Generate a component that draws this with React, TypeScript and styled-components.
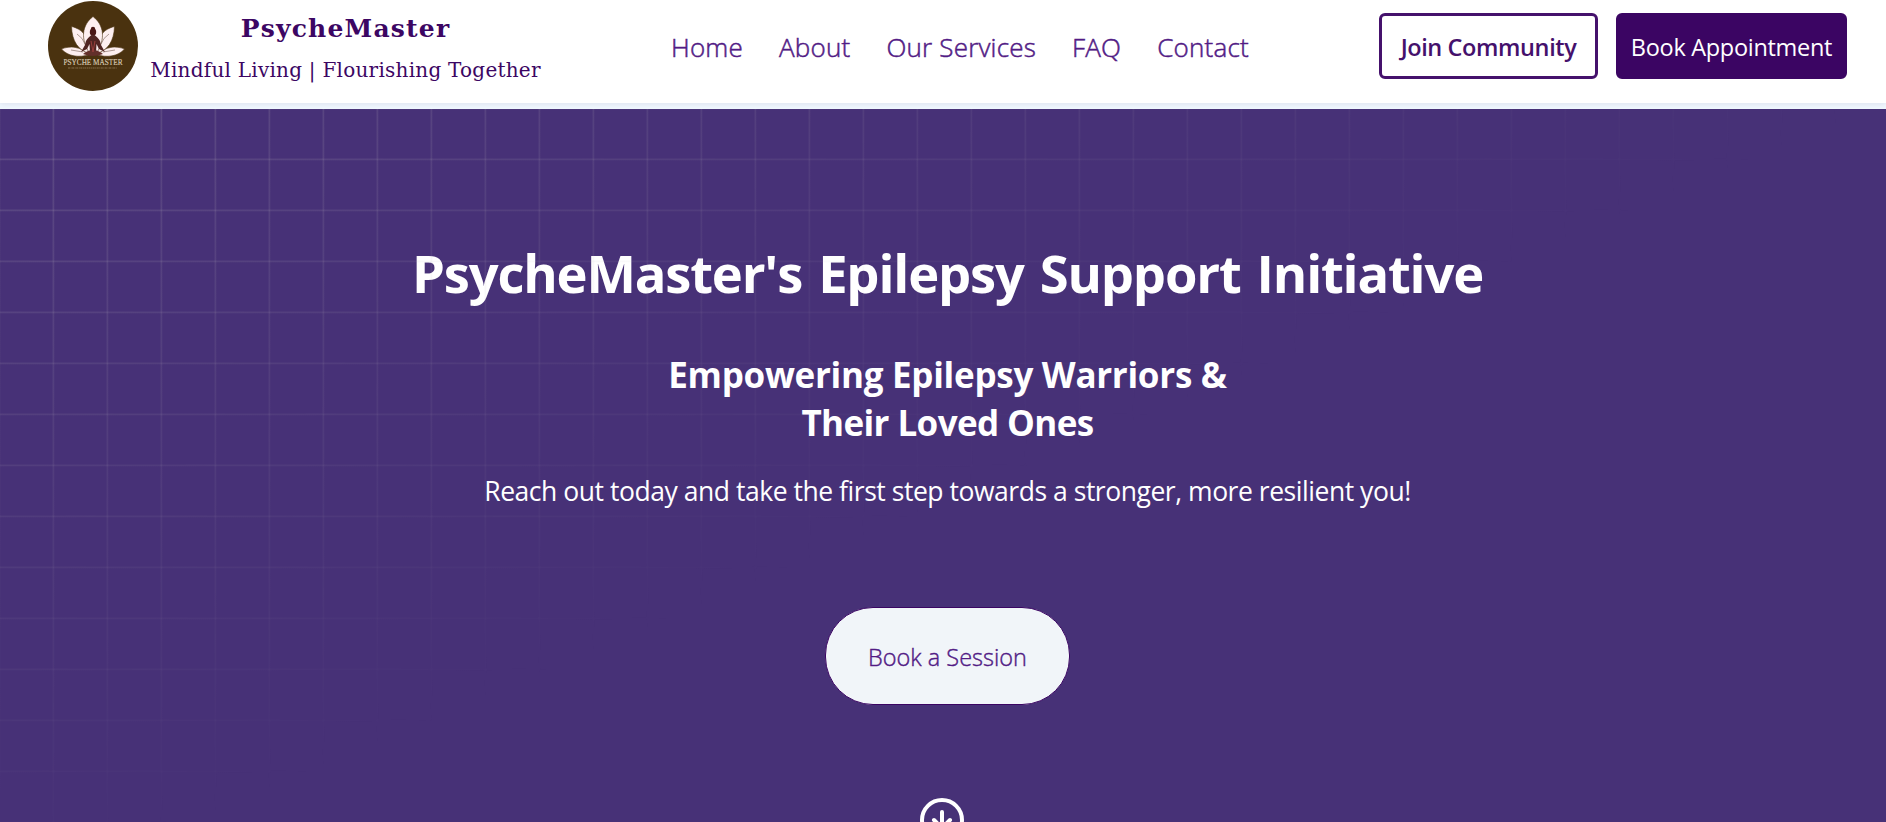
import React from 'react';
import styled, { createGlobalStyle } from 'styled-components';
import { FiArrowDownCircle } from 'react-icons/fi';

const sans = '"Open Sans", "Noto Sans", sans-serif';

const GlobalStyle = createGlobalStyle`
  *, *::before, *::after { box-sizing: border-box; }
  body { margin: 0; background: #f0f8ff; font-family: ${sans}; }
`;

const Page = styled.div`
  height: 822px;
  overflow: hidden;
  display: flex;
  flex-direction: column;
`;

const Header = styled.header`
  flex: none;
  height: 103px;
  padding: 0 39px 11px 48px;
  background: #fff;
  box-shadow: 0 1px 6px rgba(60, 20, 80, 0.1);
  display: grid;
  grid-template-columns: 623px 1fr auto;
  align-items: center;
`;

const Brand = styled.a`
  display: flex;
  align-items: center;
  gap: 11px;
  text-decoration: none;
`;

const BrandText = styled.div`
  display: flex;
  flex-direction: column;
  align-items: center;
  gap: 9px;
  width: 393px;
  padding-top: 5px;
  color: #3c0663;
  font-family: "DejaVu Serif", Georgia, serif;
  white-space: nowrap;
`;

const BrandName = styled.span`
  font-size: 25px;
  font-weight: 700;
  line-height: 34px;
  letter-spacing: 1.2px;
`;

const Tagline = styled.span`
  font-size: 20px;
  line-height: 30px;
  letter-spacing: 0.24px;
`;

const Nav = styled.nav`
  display: flex;
  gap: 36px;
  padding-top: 2px;
`;

const NavLink = styled.a`
  color: #521b85;
  font-size: 26px;
  font-weight: 300;
  line-height: 36px;
  letter-spacing: 0.2px;
  white-space: nowrap;
  -webkit-text-stroke: 0.5px #521b85;
`;

const Actions = styled.div`
  display: flex;
  gap: 18px;
`;

const ActionButton = styled.button<{ $solid?: boolean }>`
  width: ${p => (p.$solid ? 231 : 219)}px;
  height: 66px;
  padding: 2px 0 0;
  border: 3px solid ${p => (p.$solid ? '#3b0563' : '#45116c')};
  border-radius: 6px;
  background: ${p => (p.$solid ? '#3b0563' : '#fff')};
  color: ${p => (p.$solid ? '#fff' : '#45116c')};
  font-family: ${sans};
  font-size: 23.5px;
  font-weight: ${p => (p.$solid ? 400 : 600)};
  letter-spacing: ${p => (p.$solid ? -0.3 : -0.4)}px;
  white-space: nowrap;
`;

const Hero = styled.section`
  position: relative;
  flex: none;
  height: 800px;
  margin-top: 6px;
  padding: 134px 0 0 9px;
  background: #473177;
  color: #fff;
  display: flex;
  flex-direction: column;
  align-items: center;
  text-align: center;

  &::after {
    content: '';
    position: absolute;
    inset: 0;
    pointer-events: none;
    background-image:
      linear-gradient(to right, rgba(190, 185, 190, 0.05) 1px, transparent 1px, transparent 52px, rgba(190, 185, 190, 0.09) 52px, rgba(190, 185, 190, 0.09) 53px, rgba(190, 185, 190, 0.18) 53px),
      linear-gradient(to bottom, rgba(190, 185, 190, 0.05) 1px, transparent 1px, transparent 49px, rgba(190, 185, 190, 0.09) 49px, rgba(190, 185, 190, 0.09) 50px, rgba(190, 185, 190, 0.18) 50px);
    background-size: 54px 51px;
    mask-image: linear-gradient(to bottom right, #000, transparent 50%);
  }
`;

const Title = styled.h1`
  margin: 0;
  font-size: 52.5px;
  font-weight: 700;
  line-height: 60px;
  letter-spacing: -1.17px;
  word-spacing: 3.6px;
`;

const Subtitle = styled.h2`
  margin: 48px 0 0;
  font-size: 35px;
  font-weight: 700;
  line-height: 48px;
`;

const SubtitleLine = styled.span<{ $tracking: number }>`
  display: block;
  letter-spacing: ${p => p.$tracking}px;
`;

const Lead = styled.p`
  margin: 26px 0 0;
  font-size: 26.5px;
  line-height: 36px;
  letter-spacing: -0.46px;
`;

const SessionButton = styled.button`
  width: 245px;
  height: 98px;
  margin-top: 98px;
  padding: 2px 0 0;
  border: 1px solid #3b0563;
  border-radius: 48px;
  background: #f1f5f9;
  color: #521b85;
  font-family: ${sans};
  font-size: 23.5px;
  font-weight: 300;
  letter-spacing: 0;
  -webkit-text-stroke: 0.4px #521b85;
`;

const ScrollDown = styled.a`
  display: flex;
  margin: 91px 11px 0 0;
  color: #fff;
`;

const LogoImage = styled.svg`
  flex: none;
  width: 90px;
  height: 90px;
`;

function Logo() {
  return (
    <LogoImage viewBox="0 0 90 90" aria-label="Psyche Master">
      <circle cx="45" cy="45" r="45" fill="#4a320f" />
      <g fill="#fdeff0" stroke="#4a320f" strokeWidth="0.6">
        <path d="M13.5 48C22 44.5 32 45.5 42 53.5C31 57 20 55.5 13.5 48Z" />
        <path d="M76.5 48C68 44.5 58 45.5 48 53.5C59 57 70 55.5 76.5 48Z" />
        <path d="M23.5 25.5C34 28 41 35 43 53C30 50 24 40 23.5 25.5Z" />
        <path d="M66.5 25.5C56 28 49 35 47 53C60 50 66 40 66.5 25.5Z" />
        <path d="M45 15.5C56 24 58 38 48 53H42C32 38 34 24 45 15.5Z" />
      </g>
      <g fill="none" stroke="#8b746c" strokeWidth="0.7">
        <path d="M29 33Q35 37 37 43M61 33Q55 37 53 43M23 49L35 51M67 49L55 51" />
      </g>
      <circle cx="45" cy="28" r="2.2" fill="#4a1715" />
      <ellipse cx="45" cy="31" rx="3.2" ry="3.8" fill="#4a1715" />
      <path d="M43.5 34H46.5C50 37 52 38 53 44L57 51L51 48L48.5 43L48 52H42L41.5 43L39 48L33 51L37 44C38 38 40 37 43.5 34Z" fill="#502522" />
      <path d="M35 53Q45 45 55 53Q45 57 35 53Z" fill="#63302a" />
      <path d="M43 40L45 51L47 40" fill="none" stroke="#983f3b" strokeWidth="1" />
      <text x="45" y="64.3" textAnchor="middle" textLength="59" lengthAdjust="spacingAndGlyphs" fill="#d6c8b2" stroke="#d6c8b2" strokeWidth="0.15" fontFamily="Liberation Serif, serif" fontSize="7.6">PSYCHE MASTER</text>
      <path d="M20 67H69" stroke="#8c7653" strokeWidth="0.9" strokeDasharray="2 0.6 1 0.5" />
    </LogoImage>
  );
}

const links = ['Home', 'About', 'Our Services', 'FAQ', 'Contact'];

export default function App() {
  return (
    <Page>
      <GlobalStyle />
      <Header>
        <Brand>
          <Logo />
          <BrandText>
            <BrandName>PsycheMaster</BrandName>
            <Tagline>Mindful Living | Flourishing Together</Tagline>
          </BrandText>
        </Brand>
        <Nav>
          {links.map(label => (
            <NavLink key={label}>{label}</NavLink>
          ))}
        </Nav>
        <Actions>
          <ActionButton>Join Community</ActionButton>
          <ActionButton $solid>Book Appointment</ActionButton>
        </Actions>
      </Header>
      <Hero>
        <Title>PsycheMaster's Epilepsy Support Initiative</Title>
        <Subtitle>
          <SubtitleLine $tracking={-0.28}>Empowering Epilepsy Warriors &amp;</SubtitleLine>
          <SubtitleLine $tracking={-0.6}>Their Loved Ones</SubtitleLine>
        </Subtitle>
        <Lead>Reach out today and take the first step towards a stronger, more resilient you!</Lead>
        <SessionButton>Book a Session</SessionButton>
        <ScrollDown aria-label="Scroll down">
          <FiArrowDownCircle size={48} />
        </ScrollDown>
      </Hero>
    </Page>
  );
}
